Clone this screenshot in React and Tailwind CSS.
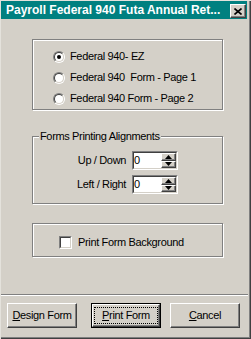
import React from "react";

const raised = "border-l border-t border-r border-b border-l-white border-t-white border-r-[#404040] border-b-[#404040] shadow-[inset_-1px_-1px_0_#808080]";

function Radio({ checked }) {
  return (
    <div className="w-[12px] h-[12px] rounded-full border border-l-[#808080] border-t-[#808080] border-r-white border-b-white flex">
      <div className="flex-1 rounded-full border border-l-[#404040] border-t-[#404040] border-r-[#d4d0c8] border-b-[#d4d0c8] bg-white flex items-center justify-center">
        {checked && <div className="w-[4px] h-[4px] rounded-full bg-black" />}
      </div>
    </div>
  );
}

function Spin({ value }) {
  return (
    <div className="w-[46px] h-[19px] flex border border-l-[#808080] border-t-[#808080] border-r-white border-b-white">
      <div className="flex-1 flex border border-l-[#404040] border-t-[#404040] border-r-[#d4d0c8] border-b-[#d4d0c8]">
        <div className="flex-1 bg-white leading-[15px] pl-[0px]">{value}</div>
        <div className="w-[15px] flex flex-col">
          <div className={"flex-1 bg-[#d4d0c8] flex items-center justify-center " + raised}>
            <svg width="7" height="4" viewBox="0 0 7 4"><path d="M3.5 0 L7 4 L0 4 Z" fill="black" /></svg>
          </div>
          <div className={"flex-1 bg-[#d4d0c8] flex items-center justify-center " + raised}>
            <svg width="7" height="4" viewBox="0 0 7 4"><path d="M0 0 L7 0 L3.5 4 Z" fill="black" /></svg>
          </div>
        </div>
      </div>
    </div>
  );
}

function Btn({ children, def }) {
  const inner = (
    <div className={"w-full h-full bg-[#d4d0c8] flex items-center justify-center " + raised}>
      {def ? (
        <div className="border border-dotted border-black w-[64px] h-[17px] flex items-center justify-center">{children}</div>
      ) : (
        children
      )}
    </div>
  );
  if (def) return <div className="w-[70px] h-[25px] border border-black flex">{inner}</div>;
  return <div className="w-[70px] h-[25px] flex">{inner}</div>;
}

const etched = "border border-[#808080] shadow-[inset_1px_1px_0_#fff,1px_1px_0_#fff]";

export default function App() {
  return (
    <div className="w-[251px] h-[339px] bg-[#d4d0c8] flex flex-col border-l border-t border-[#e4e2dc] shadow-[inset_-1px_-1px_0_#404040,inset_-2px_-2px_0_#808080] text-black text-[11px] tracking-[-0.35px] font-['Liberation_Sans',Arial,sans-serif] leading-[13px]">
      <div className="w-[246px] h-[18px] bg-[#008080] flex items-start">
        <div className="text-white font-bold text-[12px] tracking-normal leading-[18px] pl-[5px] whitespace-nowrap">Payroll Federal 940 Futa Annual Ret...</div>
        <div className={"ml-auto mr-[1px] mt-[3px] w-[16px] h-[14px] bg-[#d4d0c8] flex items-center justify-center " + raised}>
          <svg width="8" height="7" viewBox="0 0 8 7"><path d="M0.5 0.5 L7.5 6.5 M7.5 0.5 L0.5 6.5" stroke="black" strokeWidth="1.6" /></svg>
        </div>
      </div>

      <div className={"mt-[20px] ml-[31px] w-[191px] h-[71px] pt-[6px] pl-[20px] flex flex-col " + etched}>
        {[
          ["Federal 940- EZ", true],
          ["Federal 940  Form - Page 1", false],
          ["Federal 940 Form - Page 2", false],
        ].map(([t, c]) => (
          <div key={t} className="h-[21px] flex items-center">
            <Radio checked={c} />
            <span className="ml-[5px] whitespace-pre">{t}</span>
          </div>
        ))}
      </div>

      <div className={"relative mt-[26px] ml-[31px] w-[191px] h-[68px] pt-[14px] flex flex-col gap-[5px] " + etched}>
        <div className="absolute top-[-7px] left-[6px] px-[1px] bg-[#d4d0c8] leading-[13px]">Forms Printing Alignments</div>
        <div className="flex items-center">
          <div className="w-[93px] text-right">Up / Down</div>
          <div className="ml-[6px]"><Spin value="0" /></div>
        </div>
        <div className="flex items-center">
          <div className="w-[93px] text-right">Left / Right</div>
          <div className="ml-[6px]"><Spin value="0" /></div>
        </div>
      </div>

      <div className={"mt-[19px] ml-[31px] w-[191px] h-[34px] pt-[12px] pl-[26px] flex items-start " + etched}>
        <div className="w-[13px] h-[13px] border border-l-[#808080] border-t-[#808080] border-r-white border-b-white flex">
          <div className="flex-1 bg-white border border-l-[#404040] border-t-[#404040] border-r-[#d4d0c8] border-b-[#d4d0c8]" />
        </div>
        <span className="ml-[6px]">Print Form Background</span>
      </div>

      <div className="mt-[37px] w-[247px] h-[2px] border-t border-t-[#808080] border-b border-b-white" />

      <div className="mt-[7px] flex">
        <div className="ml-[6px]"><Btn><span><u>D</u>esign Form</span></Btn></div>
        <div className="ml-[14px]"><Btn def><span><u>P</u>rint Form</span></Btn></div>
        <div className="ml-[9px]"><Btn><span><u>C</u>ancel</span></Btn></div>
      </div>
    </div>
  );
}
